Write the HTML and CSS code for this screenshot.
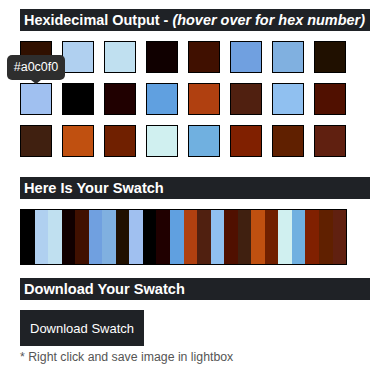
FILE: index.html
```html
<!DOCTYPE html>
<html>
<head>
<meta charset="utf-8">
<link rel="stylesheet" href="styles.css">
</head>
<body>
<div class="page">
  <h2 class="bar bar-first">Hexidecimal Output - <em>(hover over for hex number)</em></h2>
  <div class="grid">
    <div class="sq" style="background:#301000"></div>
    <div class="sq" style="background:#b0d0f0"></div>
    <div class="sq" style="background:#c0e0f0"></div>
    <div class="sq" style="background:#100000"></div>
    <div class="sq" style="background:#401000"></div>
    <div class="sq" style="background:#70a0e0"></div>
    <div class="sq" style="background:#80b0e0"></div>
    <div class="sq" style="background:#201000"></div>
    <div class="sq hovered" style="background:#a0c0f0"><span class="tip">#a0c0f0</span></div>
    <div class="sq" style="background:#000000"></div>
    <div class="sq" style="background:#200000"></div>
    <div class="sq" style="background:#60a0e0"></div>
    <div class="sq" style="background:#b04010"></div>
    <div class="sq" style="background:#502010"></div>
    <div class="sq" style="background:#90c0f0"></div>
    <div class="sq" style="background:#501000"></div>
    <div class="sq" style="background:#402010"></div>
    <div class="sq" style="background:#c05010"></div>
    <div class="sq" style="background:#702000"></div>
    <div class="sq" style="background:#d0f0f0"></div>
    <div class="sq" style="background:#70b0e0"></div>
    <div class="sq" style="background:#802000"></div>
    <div class="sq" style="background:#602000"></div>
    <div class="sq" style="background:#602010"></div>
  </div>
  <h2 class="bar bar-gap">Here Is Your Swatch</h2>
  <div class="strip">
    <span style="background:#000000"></span>
    <span style="background:#b0d0f0"></span>
    <span style="background:#c0e0f0"></span>
    <span style="background:#100000"></span>
    <span style="background:#401000"></span>
    <span style="background:#70a0e0"></span>
    <span style="background:#80b0e0"></span>
    <span style="background:#201000"></span>
    <span style="background:#a0c0f0"></span>
    <span style="background:#000000"></span>
    <span style="background:#200000"></span>
    <span style="background:#60a0e0"></span>
    <span style="background:#b04010"></span>
    <span style="background:#502010"></span>
    <span style="background:#90c0f0"></span>
    <span style="background:#501000"></span>
    <span style="background:#402010"></span>
    <span style="background:#c05010"></span>
    <span style="background:#702000"></span>
    <span style="background:#d0f0f0"></span>
    <span style="background:#70b0e0"></span>
    <span style="background:#802000"></span>
    <span style="background:#602000"></span>
    <span style="background:#602010"></span>
  </div>
  <h2 class="bar bar-gap2">Download Your Swatch</h2>
  <button class="btn">Download Swatch</button>
  <p class="note">* Right click and save image in lightbox</p>
</div>
</body>
</html>
```
FILE: styles.css
```css
html, body {
  margin: 0;
  padding: 0;
  background: #ffffff;
}
.page {
  padding: 9px 11px 0 20px;
  width: 350px;
  font-family: "Liberation Sans", Arial, sans-serif;
}
.bar {
  margin: 0;
  height: 22px;
  line-height: 22px;
  padding: 0 4px;
  background: #1f2226;
  color: #ffffff;
  font-size: 14.6px;
  font-weight: bold;
  white-space: nowrap;
  overflow: hidden;
}
.bar-first {
  font-size: 14.45px;
}
.bar em {
  font-style: italic;
}
.bar-gap {
  margin-top: 20px;
}
.bar-gap2 {
  margin-top: 13px;
}
.grid {
  margin-top: 10px;
  display: grid;
  grid-template-columns: repeat(8, 32px);
  gap: 10px;
}
.sq {
  width: 30px;
  height: 30px;
  border: 1px solid #000;
  position: relative;
}
.tip {
  position: absolute;
  left: -14px;
  top: -29px;
  width: 58px;
  height: 25px;
  line-height: 25px;
  text-align: center;
  background: #2e2e2e;
  color: #ffffff;
  border-radius: 5px;
  font-size: 12.5px;
  font-family: "Liberation Sans", Arial, sans-serif;
}
.tip::after {
  content: "";
  position: absolute;
  left: 24px;
  bottom: -4px;
  border-left: 5px solid transparent;
  border-right: 5px solid transparent;
  border-top: 4px solid #2e2e2e;
}
.strip {
  margin-top: 10px;
  width: 325px;
  height: 54px;
  border: 1px solid #000;
  display: flex;
}
.strip span {
  flex: 1;
}
.btn {
  display: block;
  margin-top: 10px;
  height: 36px;
  padding: 0 10px;
  border: none;
  background: #1f2226;
  color: #ffffff;
  font-family: "Liberation Sans", Arial, sans-serif;
  font-size: 13px;
}
.note {
  margin: 4px 0 0;
  font-size: 12.3px;
  color: #555555;
}
```
